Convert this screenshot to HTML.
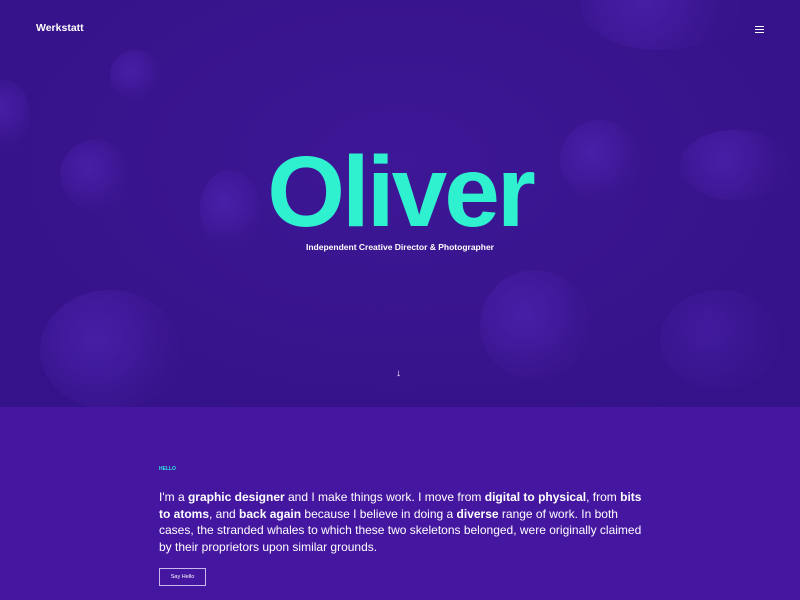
<!DOCTYPE html>
<html><head><style>
*{margin:0;padding:0;box-sizing:border-box}
body{width:800px;height:600px;overflow:hidden;font-family:"Liberation Sans",sans-serif;background:#4517a0;position:relative}
.hero{position:absolute;left:0;top:0;width:800px;height:407px;background:radial-gradient(ellipse at 50% 40%,#3d1796 0%,#36138a 70%,#33128a 100%);overflow:hidden}
.blob{position:absolute;border-radius:50%;background:radial-gradient(circle at 40% 40%,#5a2cc8,#3a168f 70%);opacity:.45}
.logo{position:absolute;left:36px;top:22px;color:#fff;font-weight:bold;font-size:10.5px}
.menu{position:absolute;left:755px;top:26px;width:9px}
.menu i{display:block;height:1px;background:#fff;margin-bottom:2px}
h1{position:absolute;left:0;width:800px;top:135px;text-align:center;color:#2ff0cf;font-size:100px;font-weight:bold;letter-spacing:-3px;line-height:115px}
.sub{position:absolute;left:0;width:800px;top:242px;text-align:center;color:#fff;font-size:8.5px;font-weight:bold}
.arrow{position:absolute;left:396px;top:368px;color:#fff;font-size:10px}
.hello{position:absolute;left:159px;top:466px;color:#2fe8e0;font-size:5px;font-weight:bold}
p{position:absolute;left:159px;top:489px;width:520px;white-space:nowrap;color:#fff;font-size:12px;line-height:16.7px}
.btn{position:absolute;left:159px;top:568px;width:47px;height:18px;border:1px solid #cbb8ee;color:#fff;font-size:5.5px;text-align:center;line-height:16px}
</style></head><body>
<div class="hero">
<div class="blob" style="left:60px;top:140px;width:70px;height:70px"></div>
<div class="blob" style="left:110px;top:50px;width:50px;height:50px"></div>
<div class="blob" style="left:40px;top:290px;width:140px;height:120px"></div>
<div class="blob" style="left:480px;top:270px;width:110px;height:110px"></div>
<div class="blob" style="left:560px;top:120px;width:80px;height:80px"></div>
<div class="blob" style="left:680px;top:130px;width:110px;height:70px"></div>
<div class="blob" style="left:580px;top:-40px;width:160px;height:90px"></div>
<div class="blob" style="left:200px;top:170px;width:60px;height:80px"></div>
<div class="blob" style="left:660px;top:290px;width:120px;height:100px;opacity:.3"></div>
<div class="blob" style="left:-20px;top:80px;width:50px;height:70px"></div>
</div>
<div class="logo">Werkstatt</div>
<div class="menu"><i></i><i></i><i></i></div>
<h1>Oliver</h1>
<div class="sub">Independent Creative Director &amp; Photographer</div>
<div class="arrow">↓</div>
<div class="hello">HELLO</div>
<p>I'm a <b>graphic designer</b> and I make things work. I move from <b>digital to physical</b>, from <b>bits</b><br><b>to atoms</b>, and <b>back again</b> because I believe in doing a <b>diverse</b> range of work. In both<br>cases, the stranded whales to which these two skeletons belonged, were originally claimed<br>by their proprietors upon similar grounds.</p>
<div class="btn">Say Hello</div>
</body></html>
